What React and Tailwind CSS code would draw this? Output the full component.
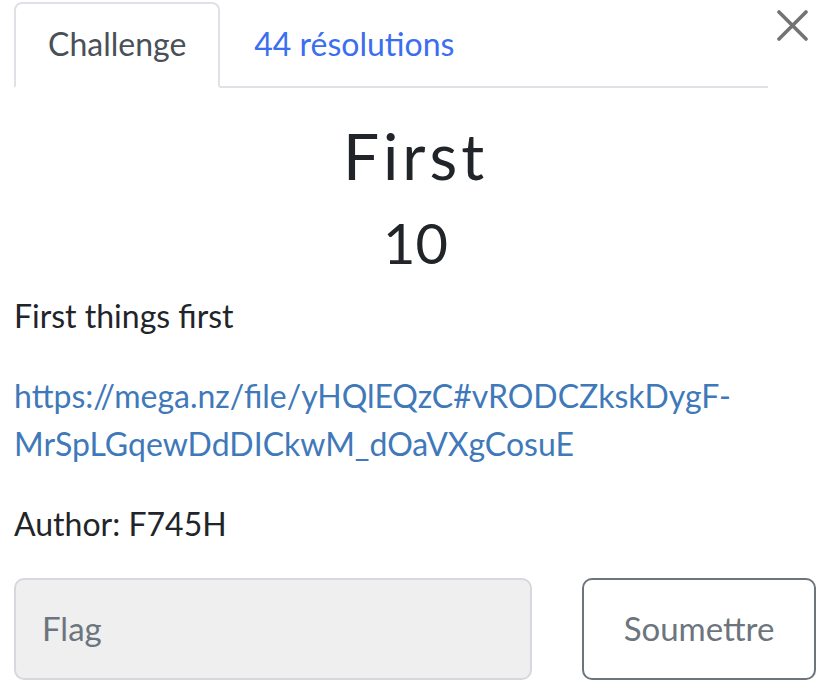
export default function App() {
  return (
    <div className="w-[832px] h-[694px] bg-white font-['Lato','Noto_Sans',sans-serif] text-[#212529] overflow-hidden">
      <div className="pl-[14px] pr-[15px] pt-[2px]">
        <div className="flex items-start">
          <div className="flex w-[754px] border-b-2 border-[#dee2e6]">
            <div className="-mb-[2px] border-2 border-[#dee2e6] border-b-white rounded-t-[8px] bg-white px-[32px] py-[16px] text-[32px] leading-[48px] text-[#495057]">
              Challenge
            </div>
            <div className="border-2 border-transparent px-[32px] py-[16px] text-[32px] leading-[48px] text-[#3b6ef0]">
              44 résolutions
            </div>
          </div>
          <div className="ml-[9px] mt-[8px] w-[31px] h-[31px]">
            <svg width="31" height="31" viewBox="0 0 31 31" fill="none">
              <path d="M2 2 L29 29 M29 2 L2 29" stroke="#737373" strokeWidth="3.6" strokeLinecap="round" />
            </svg>
          </div>
        </div>

        <div className="pt-[30px] text-center">
          <h2 className="text-[64px] leading-[1.2] tracking-[4px] font-normal">First</h2>
          <h3 className="mt-[14px] text-[56px] leading-[1.2] font-normal">10</h3>
        </div>

        <div className="mt-[16px] text-[32px] leading-[48px]">
          <p>First things first</p>
          <p className="mt-[32px] text-[#3f79b9] break-all">
            https://mega.nz/file/yHQlEQzC#vRODCZkskDygF-
            <br />
            MrSpLGqewDdDICkwM_dOaVXgCosuE
          </p>
          <p className="mt-[32px]">Author: F745H</p>
        </div>

        <div className="mt-[30px] flex items-stretch">
          <div className="w-[518px] h-[102px] rounded-[10px] border-2 border-[#d5d9dd] bg-[#efefef] flex items-center pl-[26px] text-[33px] text-[#6c757d]">
            Flag
          </div>
          <div className="ml-[50px] w-[234px] h-[102px] rounded-[10px] border-2 border-[#6c757d] flex items-center justify-center text-[33px] text-[#6c757d]">
            Soumettre
          </div>
        </div>
      </div>
    </div>
  );
}
